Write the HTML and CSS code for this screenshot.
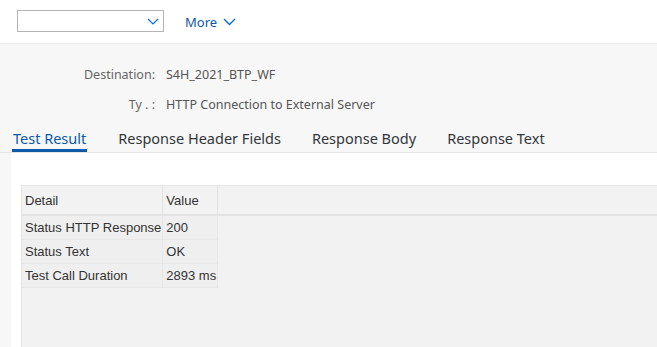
FILE: index.html
```html
<!DOCTYPE html>
<html lang="en">
<head>
    <meta charset="UTF-8">
    <title>Test Connection</title>
    <link rel="stylesheet" href="styles.css">
</head>
<body>
    <div class="toolbar">
        <div class="select-box">
            <svg class="chevron" width="12" height="7" viewBox="0 0 12 7"><path d="M1 1l5 5 5-5" fill="none" stroke="#0a6ed1" stroke-width="1.2"/></svg>
        </div>
        <div class="more">More
            <svg width="13" height="8" viewBox="0 0 13 8"><path d="M1 1l5.5 5.5L12 1" fill="none" stroke="#0a6ed1" stroke-width="1.4"/></svg>
        </div>
    </div>

    <div class="header-info">
        <div class="info-row">
            <span class="info-label">Destination:</span>
            <span class="info-value">S4H_2021_BTP_WF</span>
        </div>
        <div class="info-row">
            <span class="info-label">Ty . :</span>
            <span class="info-value">HTTP Connection to External Server</span>
        </div>
    </div>

    <div class="tabs">
        <div class="tab active">Test Result</div>
        <div class="tab">Response Header Fields</div>
        <div class="tab">Response Body</div>
        <div class="tab">Response Text</div>
    </div>

    <div class="content">
        <div class="grid">
            <table>
                <thead>
                    <tr>
                        <th class="col-detail">Detail</th>
                        <th class="col-value">Value</th>
                        <th class="col-fill"></th>
                    </tr>
                </thead>
                <tbody>
                    <tr>
                        <td>Status HTTP Response</td>
                        <td>200</td>
                        <td class="col-fill"></td>
                    </tr>
                    <tr>
                        <td>Status Text</td>
                        <td>OK</td>
                        <td class="col-fill"></td>
                    </tr>
                    <tr>
                        <td>Test Call Duration</td>
                        <td>2893 ms</td>
                        <td class="col-fill"></td>
                    </tr>
                </tbody>
            </table>
        </div>
    </div>
</body>
</html>
```

FILE: styles.css
```css
html, body {
    margin: 0;
    height: 100%;
}
body {
    font-family: "Noto Sans", "Liberation Sans", sans-serif;
    background: #f7f7f7;
    overflow: hidden;
    display: flex;
    flex-direction: column;
}
.toolbar {
    height: 43px;
    background: #fff;
    border-bottom: 1px solid #e9e9e9;
    display: flex;
    align-items: center;
    padding-left: 17px;
    flex-shrink: 0;
}
.select-box {
    width: 147px;
    height: 22px;
    box-sizing: border-box;
    border: 1px solid #b3b3b3;
    background: #fff;
    display: flex;
    align-items: center;
    justify-content: flex-end;
    padding-right: 4px;
    margin-top: -1px;
}
.more {
    margin-left: 21px;
    color: #0a5aaa;
    font-size: 13px;
    display: flex;
    align-items: center;
    gap: 6px;
}
.header-info {
    padding-top: 22px;
    flex-shrink: 0;
}
.info-row {
    display: flex;
    font-size: 12.5px;
    height: 30px;
    line-height: 18px;
}
.info-label {
    width: 166px;
    text-align: right;
    color: #666;
    padding-right: 11px;
    box-sizing: border-box;
}
.info-value {
    color: #555;
}
.tabs {
    display: flex;
    padding-left: 13px;
    height: 24px;
    margin-top: 2px;
    border-bottom: 1px solid #e5e5e5;
    flex-shrink: 0;
}
.tab {
    font-size: 14.5px;
    color: #32363a;
    margin-right: 31px;
    line-height: 20px;
}
.tab.active {
    color: #0a5aaa;
    border-bottom: 3px solid #0a5aaa;
    margin-left: -1px;
    padding: 0 1px;
}
.content {
    flex: 1;
    margin-left: 11px;
    background: #fff;
    padding: 32px 0 0 10px;
    display: flex;
}
.grid {
    flex: 1;
    background: #f2f2f2;
    border-left: 1px solid #e3e3e3;
    border-top: 1px solid #e6e6e6;
}
table {
    border-collapse: collapse;
    width: 100%;
    font-family: "Liberation Sans", Arial, sans-serif;
    font-size: 13px;
    color: #333;
}
th {
    font-weight: normal;
    text-align: left;
    height: 28px;
    padding: 0 1px 0 3px;
    border-right: 1px solid #e3e3e3;
    border-bottom: 2px solid #e3e3e3;
}
td {
    height: 23px;
    padding: 0 1px 0 3px;
    background: #efefef;
    border-right: 1px solid #e6e6e6;
    border-bottom: 1px solid #e6e6e6;
    white-space: nowrap;
}
.col-detail {
    width: 134px;
}
.col-value {
    width: 47px;
}
td.col-fill {
    background: #f2f2f2;
    border: none;
}
th.col-fill {
    border-right: none;
}
```
